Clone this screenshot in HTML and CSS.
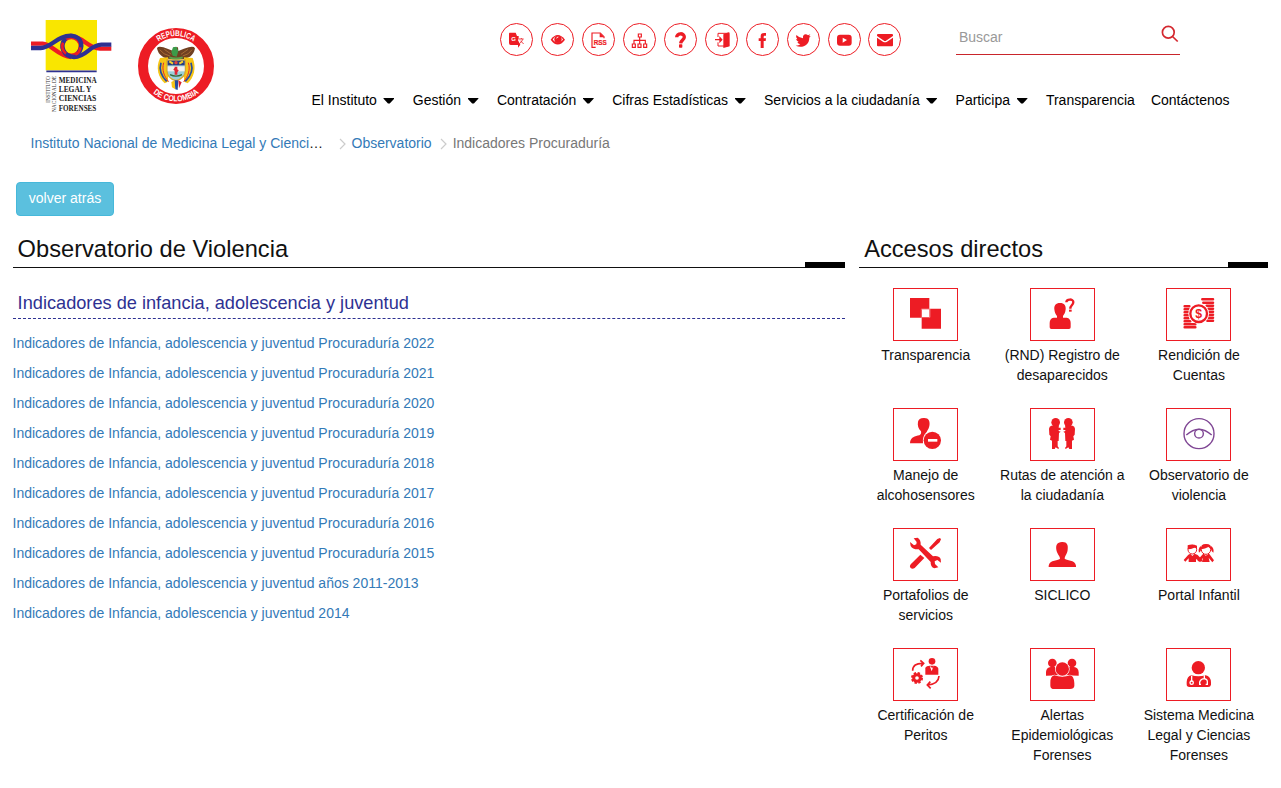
FILE: index.html
```html
<!DOCTYPE html>
<html lang="es">
<head>
<meta charset="utf-8">
<title>Indicadores Procuraduría</title>
<link rel="stylesheet" href="styles.css">
</head>
<body>
<header class="header">
  <svg class="brand" viewBox="0 0 630 330" role="img" aria-label="Instituto Nacional de Medicina Legal y Ciencias Forenses">
    <rect x="77" y="30" width="154" height="151" fill="#f9e600"/>
    <path d="M79 184H230" stroke="#2e3192" stroke-width="5"/>
    <g fill="none" stroke-width="13">
      <path d="M33 101H68C96 102 112 138 154 141" stroke="#ed1c24"/>
      <path d="M150 78C188 78 202 115 240 116H274" stroke="#ed1c24"/>
      <circle cx="154" cy="109" r="27" stroke="#ed1c24" stroke-width="11"/>
      <path d="M33 114H62C96 112 112 76 154 77C190 82 189 112 174 130" stroke="#2e3192"/>
      <path d="M136 86C118 108 130 140 162 141C202 140 208 105 244 104H274" stroke="#2e3192"/>
      <path d="M129 98A27 27 0 0 0 138 131" stroke="#ed1c24" stroke-width="8"/>
      <path d="M181 112A27 27 0 0 1 166 134" stroke="#ed1c24" stroke-width="8"/>
    </g>
    <g class="serif" font-size="27" font-weight="700" fill="#222">
      <text x="116" y="220" textLength="114" lengthAdjust="spacingAndGlyphs">MEDICINA</text>
      <text x="116" y="246" textLength="98" lengthAdjust="spacingAndGlyphs">LEGAL Y</text>
      <text x="116" y="272" textLength="113" lengthAdjust="spacingAndGlyphs">CIENCIAS</text>
      <text x="116" y="304" textLength="113" lengthAdjust="spacingAndGlyphs">FORENSES</text>
    </g>
    <g class="serif" font-size="17" fill="#333">
      <text transform="translate(91 278) rotate(-90)" textLength="80" lengthAdjust="spacingAndGlyphs">INSTITUTO</text>
      <text transform="translate(108 306) rotate(-90)" textLength="108" lengthAdjust="spacingAndGlyphs">NACIONAL DE</text>
    </g>
    <circle cx="468" cy="168" r="99" fill="#fff" stroke="#ed1c24" stroke-width="30"/>
    <path id="ringTop" d="M378 168A90 90 0 0 1 558 168" fill="none"/>
    <path id="ringLow" d="M362 168A106 106 0 0 0 574 168" fill="none"/>
    <g font-weight="700" font-size="25" fill="#fff" text-anchor="middle">
      <text><textPath href="#ringTop" startOffset="50%" textLength="112" lengthAdjust="spacingAndGlyphs">REPÚBLICA</textPath></text>
      <text><textPath href="#ringLow" startOffset="50%" textLength="150" lengthAdjust="spacingAndGlyphs">DE COLOMBIA</textPath></text>
    </g>
    <path d="M411 114Q415 108 430 112Q449 119 460 123L461 112H474L475 123Q493 116 506 112Q521 108 525 115Q522 132 510 140Q496 148 478 148H458Q436 147 426 139Q413 129 411 114Z" fill="#704022"/>
    <path d="M419 119Q430 134 450 138M433 118L454 133M516 119Q507 134 488 138M504 118L483 133" fill="none" stroke="#a66a35" stroke-width="3"/>
    <path d="M420 144L444 142V215L434 220C415 202 406 174 420 144Z" fill="#f6c515"/>
    <path d="M518 144L492 142V215L503 220C522 202 530 174 518 144Z" fill="#f6c515"/>
    <path d="M423 158C417 178 425 199 440 214M513 158C520 178 511 199 496 214" fill="none" stroke="#244ca0" stroke-width="5"/>
    <path d="M431 158C425 180 432 199 446 215M505 158C512 180 504 199 491 215" fill="none" stroke="#e22b30" stroke-width="3"/>
    <path d="M441 150H496V182C496 200 481 208 468 212C454 208 441 200 441 182Z" fill="#9bcfd9" stroke="#dba72c" stroke-width="4"/>
    <path d="M443 152H494V166H443Z" fill="#283c82"/>
    <path d="M448 154L459 161M478 161L489 154" stroke="#f4d02c" stroke-width="6"/>
    <path d="M443 169H494V184H443Z" fill="#f3f1ed"/>
    <path d="M468 170V194M462 176L474 184" stroke="#df2632" stroke-width="8"/>
    <path d="M450 194Q468 203 486 194" fill="none" stroke="#326936" stroke-width="4"/>
    <circle cx="468" cy="158" r="5" fill="#e5453b"/>
    <path d="M459 112L469 110L475 123L470 140L458 137L454 126Z" fill="#3b9b49"/>
    <path d="M448 142Q468 149 488 142" fill="none" stroke="#58a24b" stroke-width="6"/>
    <path d="M454 216L464 211L466 238L456 232Z" fill="#f6c515"/>
    <path d="M464 211H475L473 240L466 238Z" fill="#244ca0"/>
    <path d="M475 211L485 217L477 235Z" fill="#d9232d"/>
  </svg>
  <div class="header-main">
    <div class="toolbar">
      <div class="tools">
        <a class="tool"><svg viewBox="30 24 99 99"><path d="M59 53H77L81 63H86V71L84 76L91 89L84 98V90H62Q57 90 57 84V57Q57 53 59 53Z"/><text x="64" y="77" font-size="18" class="light-text">G</text><path class="line" stroke-width="2.5" d="M87 72H101M94 69V72M98 73Q96 81 88 86M91 77L101 87"/></svg></a>
        <a class="tool"><svg viewBox="153 24 99 99"><path d="M182 74Q203 46 225 74Q203 103 182 74Z"/><path d="M188 74Q203 91 219 74Q213 63 203 63Q194 63 188 74Z" fill="#fff"/><circle cx="204" cy="73" r="11"/><path d="M200 70A5 5 0 0 1 205 66" fill="none" stroke="#fff" stroke-width="3"/></svg></a>
        <a class="tool"><svg viewBox="276 24 99 99"><path class="line" stroke-width="3.5" d="M317 97H306V54H331L342 65V70"/><path d="M329 54L342 67H329Z"/><text x="311" y="90" font-size="19" stroke="#ed1c24" stroke-width=".6" textLength="39" lengthAdjust="spacingAndGlyphs">RSS</text></svg></a>
        <a class="tool"><svg viewBox="399 24 99 99"><path class="line" stroke-width="3.5" d="M445 57H454V66H445ZM427 87H436V97H427ZM444 87H453V97H444ZM461 87H470V97H461ZM449 66V87M432 87V76H466V87"/></svg></a>
        <a class="tool"><svg viewBox="522 24 99 99"><path class="line" stroke-width="10" d="M560 67C560 53 583 53 583 66C583 75 573 75 572 85"/><rect x="567" y="88" width="10" height="10" rx="2"/></svg></a>
        <a class="tool"><svg viewBox="30 24 99 99"><path class="line" stroke-width="3" d="M69 66V55H100V93H69V82"/><path d="M85 58L101 52Q104 52 104 56V94L85 99ZM73 63L83 74L73 85V76H60V72H73Z"/></svg></a>
        <a class="tool"><svg viewBox="153 24 99 99"><path d="M213 54V62H208Q206 62 206 66V70H213L212 78H206V99H197V78H191V70H197V64Q197 54 207 54Z"/></svg></a>
        <a class="tool"><svg viewBox="276 24 99 99"><path d="M304 60Q313 69 324 70C322 56 334 55 339 61L346 58L342 64L347 63L343 68C343 92 320 101 302 92Q312 92 316 88Q309 87 307 81H311Q304 77 303 72L307 73Q301 67 304 60Z"/></svg></a>
        <a class="tool"><svg viewBox="399 24 99 99"><rect x="426" y="59" width="44" height="33" rx="9"/><path d="M443 68L456 75L443 83Z" fill="#fff"/></svg></a>
        <a class="tool"><svg viewBox="519 24 99 99"><rect x="546" y="57" width="48" height="37" rx="3"/><path d="M545 65L566 79Q570 81 574 79L595 65" fill="none" stroke="#fff" stroke-width="4"/></svg></a>
      </div>
      <div class="search"><span>Buscar</span><svg viewBox="0 0 18 18"><circle cx="7.3" cy="7.3" r="5.9"/><path d="M11.5 11.5L16.7 16.5"/></svg></div>
    </div>
    <nav class="nav">
      <a class="has-menu">El Instituto</a>
      <a class="has-menu">Gestión</a>
      <a class="has-menu">Contratación</a>
      <a class="has-menu">Cifras Estadísticas</a>
      <a class="has-menu">Servicios a la ciudadanía</a>
      <a class="has-menu">Participa</a>
      <a>Transparencia</a>
      <a>Contáctenos</a>
    </nav>
  </div>
</header>

<nav class="breadcrumb">
  <span class="crumb crumb-home"><a>Instituto Nacional de Medicina Legal y Cienci</a>…</span>
  <svg class="chevron" viewBox="0 0 7 12"><path d="M1 1L6 6L1 11"/></svg>
  <span class="crumb"><a>Observatorio</a></span>
  <svg class="chevron" viewBox="0 0 7 12"><path d="M1 1L6 6L1 11"/></svg>
  <span class="crumb current">Indicadores Procuraduría</span>
</nav>

<button class="back" type="button">volver atrás</button>

<div class="columns">
  <main class="content">
    <h1 class="title">Observatorio de Violencia</h1>
    <h2 class="subtitle">Indicadores de infancia, adolescencia y juventud</h2>
    <ul class="links">
      <li><a>Indicadores de Infancia, adolescencia y juventud Procuraduría 2022</a></li>
      <li><a>Indicadores de Infancia, adolescencia y juventud Procuraduría 2021</a></li>
      <li><a>Indicadores de Infancia, adolescencia y juventud Procuraduría 2020</a></li>
      <li><a>Indicadores de Infancia, adolescencia y juventud Procuraduría 2019</a></li>
      <li><a>Indicadores de Infancia, adolescencia y juventud Procuraduría 2018</a></li>
      <li><a>Indicadores de Infancia, adolescencia y juventud Procuraduría 2017</a></li>
      <li><a>Indicadores de Infancia, adolescencia y juventud Procuraduría 2016</a></li>
      <li><a>Indicadores de Infancia, adolescencia y juventud Procuraduría 2015</a></li>
      <li><a>Indicadores de Infancia, adolescencia y juventud años 2011-2013</a></li>
      <li><a>Indicadores de Infancia, adolescencia y juventud 2014</a></li>
    </ul>
  </main>
  <aside class="shortcuts">
    <h2 class="title">Accesos directos</h2>
    <div class="grid">
      <a class="card"><svg class="icon" viewBox="99 24 195 159"><path d="M150 54H208V86H243V146H185V113H150Z"/><rect x="186" y="88" width="22" height="23" fill="#fff"/><path d="M184 113V87H209M210 86V112H185" fill="none" stroke="#fff" stroke-width="1"/></svg><span>Transparencia</span></a>
      <a class="card"><svg class="icon" viewBox="510 24 195 159"><path d="M600 69C613 69 618 77 617 88C616 99 612 104 609 108V113H620Q632 115 632 129V142Q632 147 627 147H574Q569 147 569 142V129Q569 115 581 113H591V108C587 103 584 98 583 88C582 77 587 69 600 69Z"/><path class="line" stroke-width="7" d="M619 67C619 56 640 56 640 66C640 76 631 76 631 86"/><rect x="627" y="89" width="8" height="6"/></svg><span>(RND) Registro de desaparecidos</span></a>
      <a class="card"><svg class="icon" viewBox="918 24 195 159"><path class="line" stroke-width="7.6" stroke-linecap="round" d="M1027 58H1059M1030 68H1059M1040 77H1059M1045 86H1059M1045 95H1059M1045 104H1059M1045 113H1059M1042 122H1059M974 79H988M974 88H986M974 97H985M974 106H985M974 115H986M974 124H991M974 133H1006M974 142H1006"/><circle cx="1016" cy="101" r="26" fill="#fff" stroke="#fff" stroke-width="10"/><circle cx="1016" cy="101" r="25" class="line" stroke-width="7"/><text x="1006" y="114" font-size="37">$</text></svg><span>Rendición de Cuentas</span></a>
      <a class="card"><svg class="icon" viewBox="99 24 195 159"><path d="M191 54C206 53 211 64 208 78C206 88 201 92 200 96C191 104 187 116 189 130H150C151 111 166 108 178 106C183 104 184 99 183 94C175 86 172 76 174 65Q176 55 191 54Z"/><circle cx="217" cy="121" r="26"/><path d="M204 121H232" stroke="#fff" stroke-width="8"/></svg><span>Manejo de alcohosensores</span></a>
      <a class="card"><svg class="icon" viewBox="510 24 195 159"><g id="guide"><circle cx="587" cy="67" r="13"/><path d="M574 77L597 76L596 83L602 83V90H596V93L602 95L597 99L596 123H593V139L597 144L595 147L587 142L584 147H576V122L570 119L572 109L568 104L567 86Q568 78 574 77Z"/></g><use href="#guide" transform="translate(1212 0) scale(-1 1)"/></svg><span>Rutas de atención a la ciudadanía</span></a>
      <a class="card"><svg class="icon eye" viewBox="918 24 195 159"><circle cx="1017" cy="101" r="45"/><circle cx="1017" cy="101" r="13"/><path d="M979 105Q1017 70 1055 105"/></svg><span>Observatorio de violencia</span></a>
      <a class="card"><svg class="icon" viewBox="99 24 195 159"><path d="M207 84L232 57L240 54L243 58L239 67L213 90ZM181 104L193 114L164 144Q157 149 152 144Q147 139 153 132Z"/><path d="M161 55L173 53Q183 59 182 74L219 109Q236 106 242 117L243 128L232 120L224 124L225 132L235 142L223 145Q211 141 212 126L176 88Q158 89 152 78L150 66L162 76L169 73L170 66Z"/></svg><span>Portafolios de servicios</span></a>
      <a class="card"><svg class="icon" viewBox="510 24 195 159"><path d="M606 66C621 65 625 75 623 89C622 101 614 108 614 116C618 122 646 118 648 137V141H566V137C568 118 598 122 600 116C600 108 591 102 589 89C587 75 591 67 606 66Z"/></svg><span>SICLICO</span></a>
      <a class="card"><svg class="icon" viewBox="918 24 195 159"><circle cx="997" cy="89" r="13" fill="#fff" stroke="#ed1c24" stroke-width="3"/><path d="M983 88V76Q997 71 1011 77V88Q1009 81 1001 84Q994 88 983 88Z"/><path d="M985 104L991 101L997 108L1004 101L1013 105L1028 121L1023 126L1008 117V126H986V115L976 125L971 120Z"/><circle cx="1038" cy="89" r="14" fill="#fff" stroke="#ed1c24" stroke-width="3"/><path d="M1024 88Q1020 72 1038 72Q1056 72 1053 88Q1048 82 1045 81Q1035 87 1024 88ZM1022 78Q1013 87 1017 98Q1024 93 1024 84ZM1054 78Q1063 86 1060 98Q1053 93 1052 84Z"/><path d="M1029 102H1048L1062 121L1057 127L1046 113L1049 126H1026L1029 114L1018 126L1012 121Z"/><path d="M1033 102L1038 107L1043 102" fill="none" stroke="#fff" stroke-width="2"/></svg><span>Portal Infantil</span></a>
      <a class="card"><svg class="icon" viewBox="99 24 195 159"><circle cx="216" cy="64" r="10"/><path d="M196 104V83Q199 77 209 77H223Q233 78 235 86V104Z"/><path d="M209 77L215 94L221 77L217 85Z" fill="#fff"/><circle class="line" stroke-width="9" cx="171" cy="114" r="10"/><circle class="line" stroke-width="6" stroke-dasharray="7 4.8" cx="171" cy="114" r="15"/><path class="line" stroke-width="5" d="M158 92Q158 69 189 70M181 61L191 70L183 79M237 108Q236 131 204 135M211 125L202 135L212 145"/></svg><span>Certificación de Peritos</span></a>
      <a class="card"><svg class="icon" viewBox="510 24 195 159"><circle cx="577" cy="69" r="13"/><path d="M558 107V96Q559 82 572 81H585L598 106Z"/><circle cx="636" cy="69" r="13"/><path d="M656 107V96Q655 82 642 81H628L615 106Z"/><path class="cutout" d="M583 106Q607 114 630 106Q642 107 643 130V138Q642 147 630 147H583Q571 147 571 137V128Q571 108 583 106Z"/><circle cx="607" cy="87" r="20" class="cutout"/></svg><span>Alertas Epidemiológicas Forenses</span></a>
      <a class="card"><svg class="icon" viewBox="918 24 195 159"><circle cx="1015" cy="83" r="20"/><path d="M994 106Q1015 112 1037 106Q1052 109 1053 127V134Q1052 141 1044 141H988Q980 141 980 133V126Q981 109 994 106Z"/><g fill="none" stroke="#fff" stroke-width="4"><path d="M995 107V124M1033 106V115M1023 133H1019V126Q1023 116 1033 116Q1043 118 1042 127V133H1037"/><circle cx="995" cy="128" r="5"/></g></svg><span>Sistema Medicina Legal y Ciencias Forenses</span></a>
    </div>
  </aside>
</div>
</body>
</html>
```

FILE: styles.css
```css
* { box-sizing: border-box; }
body {
  margin: 0;
  background: #fff;
  color: #111;
  font: 14px/20px "Liberation Sans", Arial, sans-serif;
}
svg { display: block; }
a { color: #337ab7; text-decoration: none; }

.header { display: flex; height: 133px; padding: 10px 0 0 20px; }
.brand { width: 210px; height: 110px; flex: none; }
.serif { font-family: "Liberation Serif", "Times New Roman", serif; }
.header-main { flex: 1; }
.toolbar { display: flex; padding: 13px 0 0 270px; }
.tools { display: flex; gap: 7.95px; }
.tool { width: 33px; height: 33px; border: 1px solid #ed1c24; border-radius: 50%; }
.tool svg { width: 33px; height: 33px; margin: -1px; fill: #ed1c24; }
svg .line { fill: none; stroke: #ed1c24; }
.tool text, .icon text { font-weight: 700; }
.tool .light-text { fill: #fff; }
.search {
  display: flex;
  justify-content: space-between;
  width: 224px;
  height: 32px;
  margin-left: 55px;
  padding: 4px 1px 0 2.5px;
  border-bottom: 1px solid #c9252b;
  color: #999;
}
.search svg { width: 18px; height: 18px; margin-top: -2px; fill: none; stroke: #d4282f; stroke-width: 1.7; }
.nav { display: flex; padding: 34px 0 0 73.5px; }
.nav a { display: flex; align-items: center; padding: 0 8px; color: #000; white-space: nowrap; }
.has-menu::after {
  content: "";
  width: 11px;
  height: 6px;
  margin: 1px 2.4px 0 6.5px;
  background: #000;
  clip-path: polygon(4% 0, 96% 0, 100% 16%, 58% 100%, 42% 100%, 0 16%);
}

.breadcrumb { display: flex; align-items: center; height: 20px; padding-left: 30.5px; }
.crumb-home { width: 308.5px; white-space: nowrap; }
.chevron { width: 7px; height: 12px; margin: 2px 5.5px 0 0; fill: none; stroke: #ccc; stroke-width: 1.2; }
.crumb + .chevron:not(:nth-child(2)) { margin-left: 8.5px; }
.current { color: #777; }

.back {
  display: block;
  width: 98px;
  height: 34px;
  margin: 29px 0 0 16px;
  padding: 0 0 2px;
  border: 1px solid #46b8da;
  border-radius: 4px;
  background: #5bc0de;
  color: #fff;
  font: inherit;
}

.columns { display: grid; grid-template-columns: 832px 409px; gap: 14px; padding: 18px 0 0 13px; }
.title {
  position: relative;
  height: 34px;
  margin: 0;
  padding-left: 4.6px;
  border-bottom: 1px solid #111;
  color: #111;
  font-size: 23.66px;
  font-weight: 400;
  line-height: 30px;
}
.shortcuts .title { padding-left: 5.2px; }
.title::after { content: ""; position: absolute; right: 0; bottom: -1px; width: 40px; height: 6px; background: #000; }
.subtitle {
  height: 29px;
  margin: 22px 0 0;
  padding-left: 4.6px;
  border-bottom: 1px dashed #2e3192;
  color: #2e3192;
  font-size: 18.2px;
  font-weight: 400;
  line-height: 26px;
}
.links { margin: 9px 0 0 -.5px; padding: 0; list-style: none; line-height: 30px; }
.grid { display: grid; grid-template-columns: repeat(3, 136.6px); grid-auto-rows: 120px; margin: 20px 0 0 -1.6px; }
.card { display: flex; flex-direction: column; align-items: center; gap: 4px; padding: 0 4px; color: #111; text-align: center; }
.icon { width: 65px; height: 53px; flex: none; outline: 1px solid #ed1c24; outline-offset: -1px; fill: #ed1c24; }
.eye { fill: none; stroke: #7f4694; stroke-width: 4.2; }
.icon .cutout { stroke: #fff; stroke-width: 4; paint-order: stroke; }
```
